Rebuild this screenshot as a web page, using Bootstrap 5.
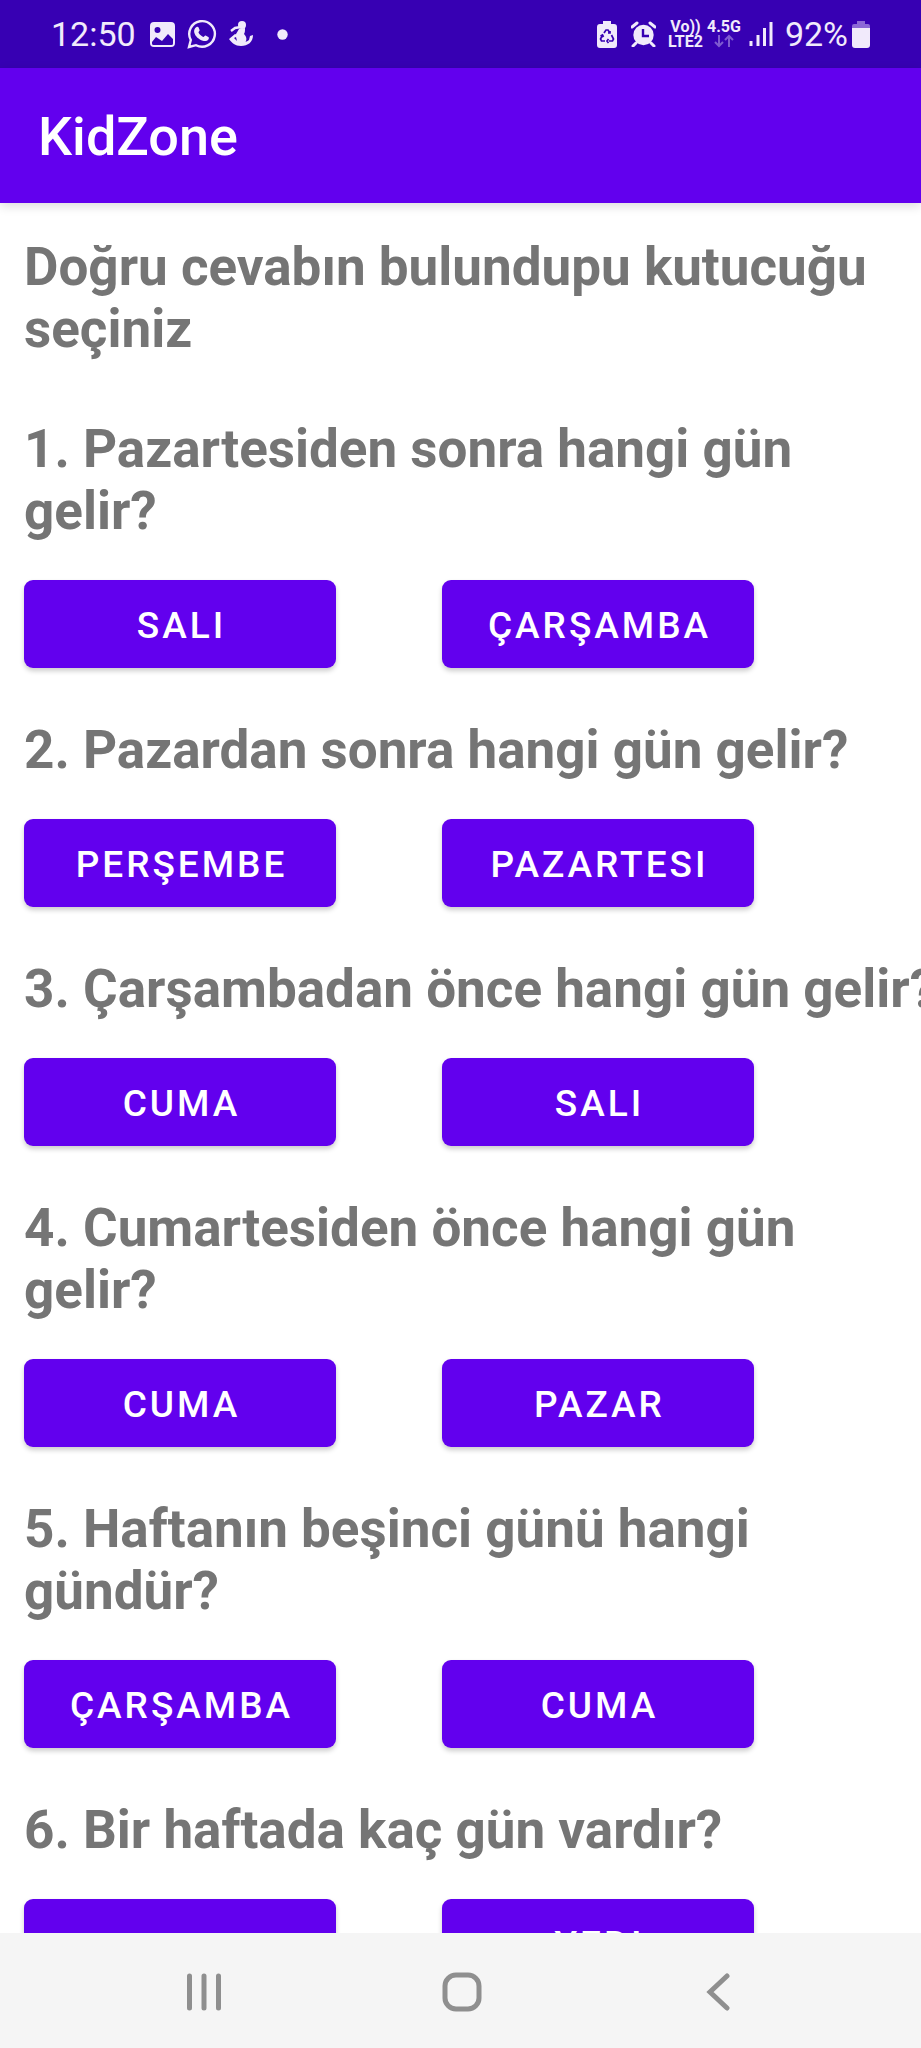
<!DOCTYPE html>
<html lang="tr">
<head>
<meta charset="utf-8">
<meta name="viewport" content="width=device-width, initial-scale=1">
<title>KidZone</title>
<link href="https://cdn.jsdelivr.net/npm/bootstrap@5.3.0/dist/css/bootstrap.min.css" rel="stylesheet">
<style>
  :root { --kz-primary: #6200ee; --kz-dark: #3700b3; --kz-ink: #757575; --kz-icon: #f1eafb; }
  body { font-family: Roboto, "Liberation Sans", sans-serif; background: #fff; }
  .status-bar { height: 68px; padding: 0 51px; background: var(--kz-dark); color: var(--kz-icon); font-size: 34px; line-height: 40px; }
  .status-bar svg { display: block; flex: none; }
  .icon-gap { margin-left: 14px; }
  .net-label { font-size: 16px; line-height: 15px; font-weight: 700; text-align: center; }
  .app-bar { height: 135px; padding: 3px 38px 0; background: var(--kz-primary); box-shadow: 0 3px 10px rgba(0,0,0,.14); z-index: 1; }
  .app-title { font-size: 54px; line-height: 62px; font-weight: 500; color: #fff; margin: 0; }
  .quiz { padding: 33px 24px 0; }
  .quiz-text { font-size: 53px; line-height: 62px; font-weight: 700; color: var(--kz-ink); margin: 0; }
  .question { margin-bottom: 51px; }
  .intro { margin-bottom: 58px; }
  .answers { display: grid; grid-template-columns: repeat(2, minmax(0, 312px)); column-gap: 106px; margin-top: 38px; }
  .answer { --bs-btn-color: #fff; --bs-btn-bg: var(--kz-primary); --bs-btn-border-color: transparent;
    --bs-btn-hover-color: #fff; --bs-btn-hover-bg: var(--kz-dark); --bs-btn-active-bg: var(--kz-dark); --bs-btn-active-color: #fff;
    height: 88px; padding: 3px 0 0 3px; border: 0; border-radius: 9px; font-size: 37px; line-height: 44px; font-weight: 500;
    letter-spacing: 3px; box-shadow: 0 3px 5px rgba(0,0,0,.2); }
  .nav-keys { height: 115px; background: #f5f5f5; padding: 2px 74px 0 76px; }
  .nav-key { background: none; border: 0; padding: 0; height: 100%; }
</style>
</head>
<body>
<div class="d-flex flex-column vh-100 overflow-hidden">
  <header class="status-bar d-flex align-items-center justify-content-between flex-shrink-0">
    <div class="d-flex align-items-center">
      <span>12:50</span>
      <svg class="icon-gap" width="25" height="25" viewBox="0 0 25 25" aria-hidden="true">
        <path fill="currentColor" fill-rule="evenodd" d="M4 0h17a4 4 0 0 1 4 4v17a4 4 0 0 1-4 4H4a4 4 0 0 1-4-4V4a4 4 0 0 1 4-4zM7.500 5a3 3 0 1 0 0 6 3 3 0 0 0 0-6zM2 20v1.500a1.500 1.500 0 0 0 1.500 1.500h18a1.500 1.500 0 0 0 1.500-1.500V17l-5-5-6 7-6-4z"/>
      </svg>
      <svg class="ms-2 me-2 px-1" width="38" height="30" viewBox="0 0 30 30" aria-hidden="true">
        <path fill="none" stroke="currentColor" stroke-width="2.400" d="M2 28l1.800-7A12.800 12.800 0 1 1 9 26.200z"/>
        <path fill="currentColor" d="M9.500 8c.8-.5 1.800-.3 2.100.6l1 2.500c.3.900-1.300 1.900-1.100 2.500 1 2 2.500 3.500 4.700 4.300.8.200 1.500-1.600 2.400-1.400l2.700 1.400c.9.500.7 1.600.1 2.500-1.200 1.800-3.600 2-5.600 1.300-4-1.300-7.400-4.300-8.500-8-.6-2.300.2-4.500 2.200-5.700z"/>
      </svg>
      <svg width="24" height="26" viewBox="0 0 24 26" aria-hidden="true">
        <g fill="currentColor"><circle cx="13" cy="4" r="4"/>
        <path d="M10 8l6-1c0 3 0 4-1 6 3 3 3 6 1 9H8l-1-9z"/>
        <path d="M0 18l6-5 3 1-1 6c3 2 9 2 12-1l1-4 3-1c0 7-5 11-12 11C6 25 3 22 0 18z"/></g>
        <path d="M2 10l4-3 6-1" stroke="currentColor" stroke-width="2.400" fill="none"/>
        <path d="M5 17l2-1 1 4z" fill="#3700b3"/>
      </svg>
      <svg class="ms-4" width="11" height="11" viewBox="0 0 11 11" aria-hidden="true"><circle cx="5.500" cy="5.500" r="5.200" fill="currentColor"/></svg>
    </div>
    <div class="d-flex align-items-center">
      <svg width="20" height="27" viewBox="0 0 20 27" aria-hidden="true">
        <path fill="currentColor" d="M6 0h8v3h3a3 3 0 0 1 3 3v18a3 3 0 0 1-3 3H3a3 3 0 0 1-3-3V6a3 3 0 0 1 3-3h3z"/>
        <path d="M7 12l2-3h2l2 3M14.500 14l2 4-1 2H12M8 20H4.500l-1-2 2-4M11.500 18l-1.500 2 1.500 2M3.500 15l2-1 1 2M11 12h2v-2" fill="none" stroke="#3700b3" stroke-width="1.700"/>
      </svg>
      <svg class="icon-gap" width="25" height="26" viewBox="0 0 25 26" aria-hidden="true">
        <circle cx="12.500" cy="14" r="10.200" fill="currentColor"/>
        <path d="M1 6l5-4M24 6l-5-4M5 22l-3 3M20 22l3 3" stroke="currentColor" stroke-width="3" stroke-linecap="round"/>
        <path d="M12 8v7h6" stroke="#3700b3" stroke-width="2.400" fill="none"/>
      </svg>
      <div class="net-label ms-2 ps-1">Vo))<br>LTE2</div>
      <div class="net-label ms-1">4.5G
        <svg class="mx-auto" width="20" height="15" viewBox="0 0 20 15" aria-hidden="true"><path d="M5 1v11M1 8l4 4 4-4M15 13V2M11 6l4-4 4 4" fill="none" stroke="#7f5bd0" stroke-width="2"/></svg>
      </div>
      <svg class="ms-2" width="24" height="26" viewBox="0 0 24 26" aria-hidden="true"><path d="M2 20v5M9 14v11M15.500 7v18M22 1v24" stroke="currentColor" stroke-width="3"/></svg>
      <span class="ms-2 ps-1">92%</span>
      <svg class="ms-1" width="18" height="27" viewBox="0 0 18 27" aria-hidden="true">
        <path fill="#8c68d6" d="M5 0h8v3h3a2 2 0 0 1 2 2v2H0V5a2 2 0 0 1 2-2h3z"/>
        <path fill="currentColor" d="M0 7h18v17a3 3 0 0 1-3 3H3a3 3 0 0 1-3-3z"/>
      </svg>
    </div>
  </header>
  <div class="app-bar d-flex align-items-center flex-shrink-0 position-relative">
    <h1 class="app-title">KidZone</h1>
  </div>

  <main class="quiz flex-grow-1 overflow-hidden">
    <p class="quiz-text intro">Doğru cevabın bulundupu kutucuğu seçiniz</p>
    <section class="question">
      <h2 class="quiz-text">1. Pazartesiden sonra hangi gün gelir?</h2>
      <div class="answers"><button type="button" class="btn answer">SALI</button><button type="button" class="btn answer">ÇARŞAMBA</button></div>
    </section>
    <section class="question">
      <h2 class="quiz-text">2. Pazardan sonra hangi gün gelir?</h2>
      <div class="answers"><button type="button" class="btn answer">PERŞEMBE</button><button type="button" class="btn answer">PAZARTESI</button></div>
    </section>
    <section class="question">
      <h2 class="quiz-text text-nowrap">3. Çarşambadan önce hangi gün gelir?</h2>
      <div class="answers"><button type="button" class="btn answer">CUMA</button><button type="button" class="btn answer">SALI</button></div>
    </section>
    <section class="question">
      <h2 class="quiz-text">4. Cumartesiden önce hangi gün gelir?</h2>
      <div class="answers"><button type="button" class="btn answer">CUMA</button><button type="button" class="btn answer">PAZAR</button></div>
    </section>
    <section class="question">
      <h2 class="quiz-text">5. Haftanın beşinci günü hangi gündür?</h2>
      <div class="answers"><button type="button" class="btn answer">ÇARŞAMBA</button><button type="button" class="btn answer">CUMA</button></div>
    </section>
    <section class="question">
      <h2 class="quiz-text">6. Bir haftada kaç gün vardır?</h2>
      <div class="answers"><button type="button" class="btn answer" aria-label="Birinci seçenek"></button><button type="button" class="btn answer">YEDI</button></div>
    </section>
  </main>

  <nav class="nav-keys d-flex flex-shrink-0" aria-label="Gezinme">
    <button type="button" class="nav-key flex-fill" aria-label="Son uygulamalar">
      <svg width="36" height="38" viewBox="0 0 36 38"><path d="M3.500 3v32M18 3v32M32.500 3v32" stroke="#8f8f8f" stroke-width="5" stroke-linecap="round"/></svg>
    </button>
    <button type="button" class="nav-key flex-fill" aria-label="Ana ekran">
      <svg width="40" height="40" viewBox="0 0 40 40"><rect x="3" y="3" width="34" height="34" rx="11" fill="none" stroke="#8f8f8f" stroke-width="5"/></svg>
    </button>
    <button type="button" class="nav-key flex-fill" aria-label="Geri">
      <svg width="36" height="38" viewBox="0 0 36 38"><path d="M26 3L9 19l17 16" fill="none" stroke="#8f8f8f" stroke-width="5" stroke-linecap="round"/></svg>
    </button>
  </nav>
</div>
<script src="https://cdn.jsdelivr.net/npm/bootstrap@5.3.0/dist/js/bootstrap.bundle.min.js"></script>
</body>
</html>
